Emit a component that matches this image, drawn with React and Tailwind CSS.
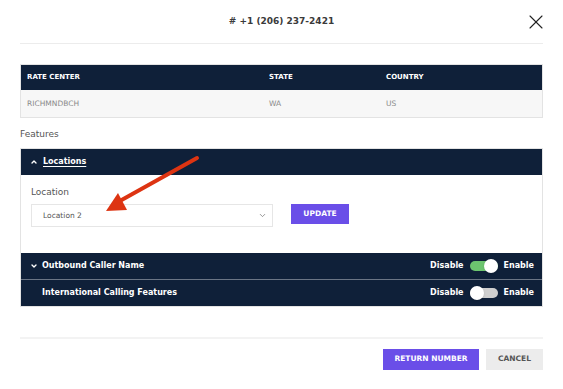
import { ChevronUp, ChevronDown, X } from "lucide-react";

function Toggle({ on }) {
  return (
    <span className={`relative inline-flex h-[10px] w-[28px] items-center rounded-full ${on ? "bg-[#6cc56f]" : "bg-[#cfcfcf]"}`}>
      <span className={`absolute h-[14px] w-[14px] rounded-full bg-white shadow ${on ? "right-0" : "left-0"}`} />
    </span>
  );
}

function FeatureRow({ title, on, caret, border }) {
  return (
    <div className={`flex items-center justify-between bg-[#0f2039] pl-[9px] pr-[8px] text-white ${border ? "h-[27px] border-b border-[#6b7585]" : "h-[26px]"}`}>
      <div className="flex items-center gap-[5px] text-[8px] font-bold">
        <span className="w-[7px]">{caret && <ChevronDown size={8} strokeWidth={4} />}</span>
        <span>{title}</span>
      </div>
      <div className="flex items-center gap-[6px] text-[8px] font-bold">
        <span>Disable</span>
        <Toggle on={on} />
        <span>Enable</span>
      </div>
    </div>
  );
}

export default function App() {
  return (
    <div className="relative h-[389px] w-[563px] bg-white px-[20px] text-[#333]" style={{ fontFamily: "'DejaVu Sans', sans-serif" }}>
      <div className="grid h-[44px] grid-cols-[1fr_auto_1fr] items-center border-b border-[#ececec]">
        <span />
        <h1 className="text-[9px] font-bold text-[#3a3a3a]">
          # +1 (206) 237-2421
        </h1>
        <div className="flex justify-end">
          <X size={24} strokeWidth={1.1} className="-mr-[5px] text-[#222]" />
        </div>
      </div>

      <div className="mt-[20px] border border-[#e3e3e3]">
        <div className="grid h-[25px] grid-cols-[242px_117px_1fr] items-center bg-[#0f2039] px-[6px] text-[7px] font-bold text-white">
          <span>RATE CENTER</span>
          <span>STATE</span>
          <span>COUNTRY</span>
        </div>
        <div className="grid h-[27px] grid-cols-[242px_117px_1fr] items-center bg-[#f7f7f7] px-[6px] text-[7.5px] text-[#8a8a8a]">
          <span>RICHMNDBCH</span>
          <span>WA</span>
          <span>US</span>
        </div>
      </div>

      <p className="mt-[10px] text-[9px] text-[#555]">Features</p>

      <div className="mt-[6px] border border-[#e3e3e3]">
        <div className="flex h-[26px] items-center gap-[5px] bg-[#0f2039] pl-[9px] text-[8px] font-bold text-white">
          <ChevronUp size={8} strokeWidth={4} />
          <span className="underline underline-offset-2">Locations</span>
        </div>
        <div className="h-[78px] bg-white px-[10px] pt-[11px]">
          <p className="text-[9px] text-[#555]">Location</p>
          <div className="mt-[5px] flex items-start gap-[18px]">
            <div className="flex h-[23px] w-[242px] items-center justify-between border border-[#e6e6e6] pl-[11px] pr-[5px] text-[7.5px] text-[#555]">
              <span>Location 2</span>
              <ChevronDown size={9} strokeWidth={2} className="text-[#777]" />
            </div>
            <button className="h-[20px] w-[58px] bg-[#6a4ee8] text-[7.5px] font-bold text-white">
              UPDATE
            </button>
          </div>
        </div>
        <FeatureRow title="Outbound Caller Name" on caret border />
        <FeatureRow title="International Calling Features" on={false} />
      </div>

      <div className="mt-[30px] border-t-2 border-[#f3f3f3]" />

      <div className="mt-[10px] flex justify-end gap-[7px]">
        <button className="h-[21px] w-[96px] bg-[#6a4ee8] text-[7.5px] font-bold text-white">
          RETURN NUMBER
        </button>
        <button className="h-[21px] w-[57px] bg-[#ececec] text-[7.5px] font-bold text-[#555]">
          CANCEL
        </button>
      </div>

      <svg className="pointer-events-none absolute left-0 top-0" width="563" height="389">
        <line x1="197" y1="158" x2="118" y2="202" stroke="#dd3412" strokeWidth="4" strokeLinecap="round" />
        <polygon points="106,211 118,193 127,210" fill="#dd3412" />
      </svg>
    </div>
  );
}
